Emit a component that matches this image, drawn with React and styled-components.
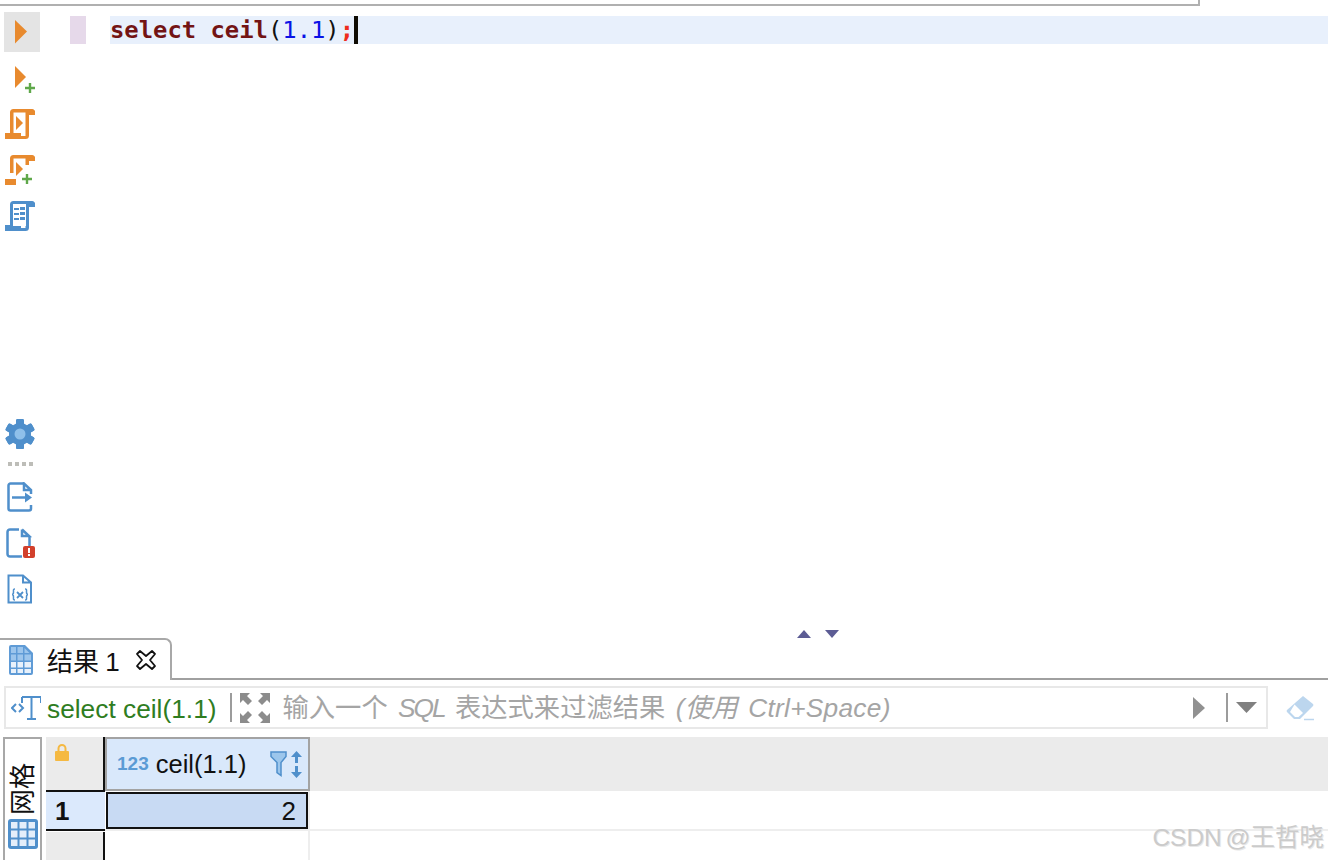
import styled, { createGlobalStyle } from "styled-components";

const GlobalStyle = createGlobalStyle`
  html, body {
    margin: 0;
    padding: 0;
    background: #fff;
    overflow: hidden;
  }
  * {
    box-sizing: border-box;
  }
`;

const UI_FONT = `"Liberation Sans", "Noto Sans CJK SC", sans-serif`;
const ORANGE = "#e88a2e";
const BLUE = "#4f8fcb";
const GREEN = "#5fa84a";

const Page = styled.div`
  position: relative;
  width: 1328px;
  height: 860px;
  display: flex;
  flex-direction: column;
  overflow: hidden;
  background: #fff;
  font-family: ${UI_FONT};
`;

const TopStrip = styled.div`
  width: 1200px;
  height: 6px;
  flex: none;
  border-right: 2px solid #b0b0b0;
  border-bottom: 2px solid #b0b0b0;
`;

const EditorPane = styled.div`
  height: 632px;
  flex: none;
  display: flex;
`;

const Rail = styled.div`
  width: 46px;
  flex: none;
  display: flex;
  flex-direction: column;
  justify-content: space-between;
  padding: 6px 0 29px 4px;
`;

const RailGroup = styled.div`
  display: flex;
  flex-direction: column;
  gap: 6px;
`;

const RailButton = styled.div`
  width: 36px;
  height: 40px;
  display: flex;
  align-items: center;
  justify-content: center;
  background: ${(p) => (p.$active ? "#e4e4e4" : "transparent")};
`;

const RailDots = styled.div`
  height: 4px;
  margin: 2px 0 5px;
  display: flex;
  gap: 3px;
  padding-left: 4px;
  span {
    width: 4px;
    height: 4px;
    background: #bdbdb8;
  }
`;

const CodePane = styled.div`
  flex: 1;
  display: flex;
  flex-direction: column;
  padding-top: 10px;
`;

const CodeLine = styled.div`
  display: flex;
  height: 28px;
`;

const BreakMark = styled.div`
  width: 16px;
  height: 28px;
  margin: 0 24px;
  background: #e6d9ea;
`;

const CodeText = styled.div`
  flex: 1;
  display: flex;
  align-items: center;
  background: #e8f0fc;
`;

const CodeRun = styled.span`
  font-family: "DejaVu Sans Mono", monospace;
  font-size: 23.85px;
  line-height: 28px;
  white-space: pre;
  color: #111;
`;

const Keyword = styled.span`
  font-weight: 700;
  color: #731414;
`;

const NumberLit = styled.span`
  color: #0a12e6;
`;

const Semi = styled.span`
  font-weight: 700;
  color: #ee2c1c;
`;

const Caret = styled.span`
  width: 4px;
  height: 28px;
  background: #100c04;
`;

const SashArrows = styled.div`
  margin-top: auto;
  margin-left: 751px;
  display: flex;
  gap: 14px;
  height: 8px;
`;

const TabBar = styled.div`
  height: 42px;
  flex: none;
  display: flex;
`;

const Tab = styled.div`
  width: 172px;
  height: 42px;
  display: flex;
  align-items: center;
  padding-left: 9px;
  border-top: 2px solid #a8a8a8;
  border-right: 2px solid #a8a8a8;
  border-top-right-radius: 7px;
  font-size: 26px;
  color: #111;
`;

const TabLabel = styled.span`
  margin: 0 0 2px 14px;
  white-space: pre;
  word-spacing: -1px;
`;

const TabRule = styled.div`
  flex: 1;
  border-bottom: 2px solid #a0a0a0;
`;

const FilterRow = styled.div`
  height: 43px;
  flex: none;
  margin-top: 6px;
  padding-left: 4px;
  display: flex;
  align-items: center;
`;

const FilterBox = styled.div`
  width: 1264px;
  height: 43px;
  display: flex;
  align-items: center;
  border: 2px solid #e8e8e8;
  padding-left: 5px;
`;

const SqlText = styled.span`
  margin: 3px 0 0 6px;
  font-size: 26.3px;
  color: #2f7d1f;
  white-space: pre;
`;

const Divider = styled.span`
  width: 2px;
  height: 29px;
  flex: none;
  background: #9c9c9c;
  margin-left: ${(p) => p.$left || 0}px;
`;

const Hint = styled.span`
  margin: 0 0 4px 13px;
  font-size: 26.3px;
  color: #a5a5a5;
  white-space: pre;
  word-spacing: 3px;
`;

const HintWord = styled.em`
  font-style: italic;
  letter-spacing: -2px;
`;

const HintTail = styled.em`
  font-style: italic;
  letter-spacing: 0.25px;
`;

const FilterTools = styled.div`
  margin-left: auto;
  display: flex;
  align-items: center;
  padding-right: 9px;
`;

const EraserSlot = styled.div`
  margin-left: 18px;
  display: flex;
`;

const Results = styled.div`
  flex: 1;
  margin-top: 8px;
  padding-left: 3px;
  display: flex;
  gap: 4px;
  min-height: 0;
`;

const ViewTab = styled.div`
  width: 39px;
  display: flex;
  flex-direction: column;
  align-items: center;
  border: 2px solid #a8a8a8;
  border-bottom: none;
  padding-top: 22px;
`;

const ViewLabel = styled.span`
  writing-mode: vertical-rl;
  text-orientation: sideways;
  transform: rotate(180deg);
  font-size: 26px;
  line-height: 30px;
  height: 54px;
  color: #111;
`;

const ViewIcon = styled.div`
  margin-top: 4px;
  display: flex;
`;

const Table = styled.div`
  flex: 1;
  display: grid;
  grid-template-columns: 59px 205px 1fr;
  grid-template-rows: 54px 40px 1fr;
`;

const Corner = styled.div`
  background: #ebebeb;
  border-right: 2px solid #111;
  padding: 7px 0 0 9px;
`;

const ColumnHead = styled.div`
  display: flex;
  align-items: center;
  background: #d9e8fb;
  border: 2px solid #a3a3a3;
  padding-left: 10px;
  font-size: 25.5px;
  color: #111;
`;

const TypeBadge = styled.span`
  font-size: 19px;
  font-weight: 700;
  color: #5b9bd5;
  margin-right: 7px;
`;

const HeadTools = styled.div`
  margin-left: auto;
  margin-right: 6px;
  display: flex;
`;

const HeadFill = styled.div`
  background: #ebebeb;
`;

const RowHead = styled.div`
  display: flex;
  align-items: center;
  background: #dbe9fc;
  border-top: 2px solid #111;
  border-bottom: 2px solid #111;
  margin-top: -1px;
  padding: 2px 0 0 9px;
  font-size: 26px;
  font-weight: 700;
  color: #111;
`;

const ValueWrap = styled.div`
  border-right: 2px solid #eee;
  border-bottom: 2px solid #eee;
  padding: 1px 0 0 1px;
`;

const ValueCell = styled.div`
  height: 37px;
  display: flex;
  align-items: center;
  justify-content: flex-end;
  background: #c8daf3;
  border: 2.5px solid #111;
  padding: 1px 10px 0 0;
  font-size: 26px;
  color: #111;
`;

const RowFill = styled.div`
  border-bottom: 2px solid #eee;
`;

const Gutter = styled.div`
  background: #ebebeb;
  border-right: 2px solid #111;
  margin-top: 1px;
`;

const EmptyCell = styled.div`
  border-right: 2px solid #eee;
`;

const Watermark = styled.div`
  position: absolute;
  right: 4px;
  bottom: 8px;
  font-size: 24.5px;
  line-height: 28px;
  word-spacing: -3px;
  color: #cbcbcb;
  text-shadow: 1px 1px 0 #e8e8e8;
  white-space: pre;
`;

const PlayIcon = () => (
  <svg width="12" height="24" viewBox="0 0 12 24" style={{ marginLeft: -2 }}>
    <path d="M0 0L12 11.5L0 23.5Z" fill={ORANGE} />
  </svg>
);

const Plus = ({ x, y }) => (
  <path d={`M${x + 3.8} ${y}h2.400v3.800h3.800v2.400h-3.800v3.800h-2.400v-3.800h-3.800v-2.400h3.800z`} fill={GREEN} />
);

const PlayPlusIcon = () => (
  <svg width="22" height="30" viewBox="0 0 22 30" style={{ marginLeft: 6 }}>
    <path d="M1 3L12 14L1 25Z" fill={ORANGE} />
    <Plus x={11} y={20} />
  </svg>
);

const SCROLL_PATH =
  "M5 24V3.5A3.5 3.5 0 0 1 8.5 0H26a4 4 0 0 1 4 6h-6v20.5a3.5 3.5 0 0 1-3.5 3.5H3a3 3 0 0 1-3-6h16v3h4.500V3.500H8.500V24z";

const ScrollPlayIcon = () => (
  <svg width="30" height="30" viewBox="0 0 30 30" style={{ marginLeft: -4 }}>
    <path d={SCROLL_PATH} fill={ORANGE} fillRule="evenodd" />
    <path d="M11 7L18 14L11 21Z" fill={ORANGE} />
  </svg>
);

const ScrollPlayPlusIcon = () => (
  <svg width="30" height="30" viewBox="0 0 30 30" style={{ marginLeft: -4 }}>
    <path d="M5 18V3.500A3.500 3.500 0 0 1 8.500 0H26a4 4 0 0 1 4 6h-6v4h-3.500V3.500H8.500V18z" fill={ORANGE} />
    <path d="M0 24h11v6H3a3 3 0 0 1-3-6z" fill={ORANGE} />
    <path d="M11 7L18 14L11 21Z" fill={ORANGE} />
    <Plus x={17} y={19} />
  </svg>
);

const ScrollListIcon = () => (
  <svg width="30" height="30" viewBox="0 0 30 30" style={{ marginLeft: -4 }}>
    <path d={SCROLL_PATH} fill={BLUE} fillRule="evenodd" />
    <path d="M8 3h13v22H8z" fill="#fff" />
    <path d="M9 7h5v2H9zM15 6h5v3h-5zM9 12h5v2H9zM15 11h5v3h-5zM9 17h5v2H9zM15 16h5v3h-5z" fill={BLUE} />
  </svg>
);

const GearIcon = () => (
  <svg width="30" height="30" viewBox="0 0 30 30" style={{ marginLeft: -4 }}>
    {[0, 60, 120, 180, 240, 300].map((a) => (
      <rect key={a} x="11" y="0" width="8" height="30" rx="1.500" fill={BLUE} transform={`rotate(${a} 15 15)`} />
    ))}
    <circle cx="15" cy="15" r="11" fill={BLUE} />
    <circle cx="15" cy="15" r="5.500" fill="#8fc0ea" />
  </svg>
);

const DocArrowIcon = () => (
  <svg width="26" height="30" viewBox="0 0 26 30" style={{ marginLeft: -4 }}>
    <path d="M17 1.500H3.500a2 2 0 0 0-2 2v23a2 2 0 0 0 2 2H22a2 2 0 0 0 2-2V23M24 12V8L17 1.500V8h7" fill="none" stroke={BLUE} strokeWidth="2.500" />
    <path d="M5 15.500h14" stroke={BLUE} strokeWidth="2.500" />
    <path d="M18 10.500L25 15.500L18 20.500Z" fill={BLUE} />
  </svg>
);

const DocErrorIcon = () => (
  <svg width="30" height="30" viewBox="0 0 30 30" style={{ marginLeft: -2 }}>
    <path d="M13 1.500H4A2.500 2.500 0 0 0 1.500 4v22A2.500 2.500 0 0 0 4 28.500h12" fill="none" stroke={BLUE} strokeWidth="2.500" />
    <path d="M16 1.500V8h7L16 1.500M23.500 8v10" fill="none" stroke={BLUE} strokeWidth="2.500" />
    <rect x="17" y="18" width="12" height="12" rx="2" fill="#d2402c" />
    <path d="M22 20h2v5h-2zM22 26h2v2h-2z" fill="#fff" />
  </svg>
);

const DocVarIcon = () => (
  <svg width="26" height="30" viewBox="0 0 26 30" style={{ marginLeft: -4 }}>
    <path d="M1.500 1.500H16L24 8.500V28.500H1.500ZM16 1.500V8.500H24" fill="none" stroke={BLUE} strokeWidth="2" />
    <path d="M8 15c-2 0-1.500 1-1.500 3s-1 2.500-1.500 2.500c.5 0 1.500.5 1.500 2.500s-.5 3 1.500 3M18 15c2 0 1.500 1 1.500 3s1 2.500 1.500 2.500c-.5 0-1.500.5-1.500 2.500s.5 3-1.500 3" fill="none" stroke={BLUE} strokeWidth="1.500" />
    <path d="M10 18l6 6M16 18l-6 6" stroke={BLUE} strokeWidth="1.800" />
  </svg>
);

const SashUp = () => (
  <svg width="14" height="8" viewBox="0 0 14 8">
    <path d="M0 8L7 0L14 8Z" fill="#5c5c94" />
  </svg>
);

const SashDown = () => (
  <svg width="14" height="8" viewBox="0 0 14 8">
    <path d="M0 0H14L7 8Z" fill="#5c5c94" />
  </svg>
);

const TableIcon = () => (
  <svg width="24" height="30" viewBox="0 0 24 30">
    <path d="M2 0H16L24 8V28a2 2 0 0 1-2 2H2a2 2 0 0 1-2-2V2a2 2 0 0 1 2-2Z" fill="#5f9bd6" />
    <path d="M2 2h5v6H2zM8.500 2h5.500v6H8.500zM15.500 3l0 5h5zM2 9.500h5v6H2zM8.500 9.500h5.500v6H8.500zM15.500 9.500h6.500v6h-6.500z" fill="#9cc5ec" />
    <path d="M2 17h5v5.500H2zM8.500 17h5.500v5.500H8.500zM15.500 17h6.500v5.500h-6.500zM2 24h5v4H2zM8.500 24h5.500v4H8.500zM15.500 24h6.500v4h-6.500z" fill="#e8f1fb" />
  </svg>
);

const CloseIcon = () => (
  <svg width="22" height="22" viewBox="0 0 22 22" style={{ marginLeft: 15, marginBottom: 1 }}>
    <path d="M2 5L5 2L11 7L17 2L20 5L15 11L20 17L17 20L11 15L5 20L2 17L7 11Z" fill="#fff" stroke="#111" strokeWidth="1.800" strokeLinejoin="round" />
  </svg>
);

const TextTagIcon = () => (
  <svg width="30" height="24" viewBox="0 0 30 24">
    <path d="M5 8L1 12L5 16M8 8L12 12L8 16" fill="none" stroke="#4f8fcb" strokeWidth="2" />
    <path d="M11 1H30V7M11 1V7M20.500 1V23M16 23H25" fill="none" stroke="#4f8fcb" strokeWidth="2" />
  </svg>
);

const ExpandIcon = () => (
  <svg width="30" height="30" viewBox="0 0 30 30" style={{ marginLeft: 8 }}>
    <g fill="#8c8c8c">
      <path d="M0 0H10L7 3L12 8L8 12L3 7L0 10Z" />
      <path d="M30 0H20L23 3L18 8L22 12L27 7L30 10Z" />
      <path d="M0 30H10L7 27L12 22L8 18L3 23L0 20Z" />
      <path d="M30 30H20L23 27L18 22L22 18L27 23L30 20Z" />
    </g>
  </svg>
);

const RunHintIcon = () => (
  <svg width="12" height="22" viewBox="0 0 12 22" style={{ marginRight: 21 }}>
    <path d="M0 0L12 11L0 22Z" fill="#919191" />
  </svg>
);

const DropIcon = () => (
  <svg width="21" height="11" viewBox="0 0 21 11" style={{ marginLeft: 8 }}>
    <path d="M0 0H21L10.500 11Z" fill="#808080" />
  </svg>
);

const EraserIcon = () => (
  <svg width="28" height="26" viewBox="0 0 28 26">
    <path d="M17 1L27 9a1.500 1.500 0 0 1 0 2L14 24H8L1 17a1.500 1.500 0 0 1 0-2Z" fill="#bcd6ee" />
    <path d="M8.500 9.500L17 18L12.500 22H9L4 17Z" fill="#fff" />
    <path d="M18 24.500h10" stroke="#bcd6ee" strokeWidth="1.500" />
  </svg>
);

const LockIcon = () => (
  <svg width="14" height="17" viewBox="0 0 14 17">
    <path d="M3.500 8V4.500a3.500 3.500 0 0 1 7 0V8" fill="none" stroke="#f5b942" strokeWidth="2" />
    <rect x="0" y="7" width="14" height="10" rx="1" fill="#f5b942" />
  </svg>
);

const FilterIcon = () => (
  <svg width="17" height="27" viewBox="0 0 17 27">
    <path d="M1 1H16V5.500L11 11.500V24.500L7 21.500V11.500L1 5.500Z" fill="#9cc6ec" stroke="#4f8fcb" strokeWidth="1.500" />
  </svg>
);

const SortIcon = () => (
  <svg width="11" height="27" viewBox="0 0 11 27" style={{ marginLeft: 4 }}>
    <path d="M5.500 0L11 6H7V12H4V6H0Z" fill={BLUE} />
    <path d="M5.500 27L11 21H7V15H4V21H0Z" fill={BLUE} />
  </svg>
);

const GridIcon = () => (
  <svg width="30" height="30" viewBox="0 0 30 30">
    <rect width="30" height="30" rx="3" fill={BLUE} />
    <path d="M3 3h6.500v6.500H3zM11.500 3h7v6.500h-7zM20.500 3H27v6.500h-6.500zM3 11.500h6.500v7H3zM11.500 11.500h7v7h-7zM20.500 11.500H27v7h-6.500zM3 20.500h6.500V27H3zM11.500 20.500h7V27h-7zM20.500 20.500H27V27h-6.500z" fill="#e4eefa" />
  </svg>
);

export default function App() {
  return (
    <Page>
      <GlobalStyle />
      <TopStrip />
      <EditorPane>
        <Rail>
          <RailGroup>
            <RailButton $active><PlayIcon /></RailButton>
            <RailButton><PlayPlusIcon /></RailButton>
            <RailButton><ScrollPlayIcon /></RailButton>
            <RailButton><ScrollPlayPlusIcon /></RailButton>
            <RailButton><ScrollListIcon /></RailButton>
          </RailGroup>
          <RailGroup>
            <RailButton><GearIcon /></RailButton>
            <RailDots><span /><span /><span /><span /></RailDots>
            <RailButton><DocArrowIcon /></RailButton>
            <RailButton><DocErrorIcon /></RailButton>
            <RailButton><DocVarIcon /></RailButton>
          </RailGroup>
        </Rail>
        <CodePane>
          <CodeLine>
            <BreakMark />
            <CodeText>
              <CodeRun>
                <Keyword>select ceil</Keyword>(<NumberLit>1.1</NumberLit>)<Semi>;</Semi>
              </CodeRun>
              <Caret />
            </CodeText>
          </CodeLine>
          <SashArrows>
            <SashUp />
            <SashDown />
          </SashArrows>
        </CodePane>
      </EditorPane>
      <TabBar>
        <Tab>
          <TableIcon />
          <TabLabel>结果 1</TabLabel>
          <CloseIcon />
        </Tab>
        <TabRule />
      </TabBar>
      <FilterRow>
        <FilterBox>
          <TextTagIcon />
          <SqlText>select ceil(1.1)</SqlText>
          <Divider $left={13} />
          <ExpandIcon />
          <Hint>输入一个 <HintWord>SQL</HintWord> 表达式来过滤结果 <HintTail>(使用 Ctrl+Space)</HintTail></Hint>
          <FilterTools>
            <RunHintIcon />
            <Divider />
            <DropIcon />
          </FilterTools>
        </FilterBox>
        <EraserSlot><EraserIcon /></EraserSlot>
      </FilterRow>
      <Results>
        <ViewTab>
          <ViewLabel>网格</ViewLabel>
          <ViewIcon><GridIcon /></ViewIcon>
        </ViewTab>
        <Table>
          <Corner><LockIcon /></Corner>
          <ColumnHead>
            <TypeBadge>123</TypeBadge>
            ceil(1.1)
            <HeadTools>
              <FilterIcon />
              <SortIcon />
            </HeadTools>
          </ColumnHead>
          <HeadFill />
          <RowHead>1</RowHead>
          <ValueWrap><ValueCell>2</ValueCell></ValueWrap>
          <RowFill />
          <Gutter />
          <EmptyCell />
          <div />
        </Table>
      </Results>
      <Watermark>CSDN @王哲晓</Watermark>
    </Page>
  );
}
